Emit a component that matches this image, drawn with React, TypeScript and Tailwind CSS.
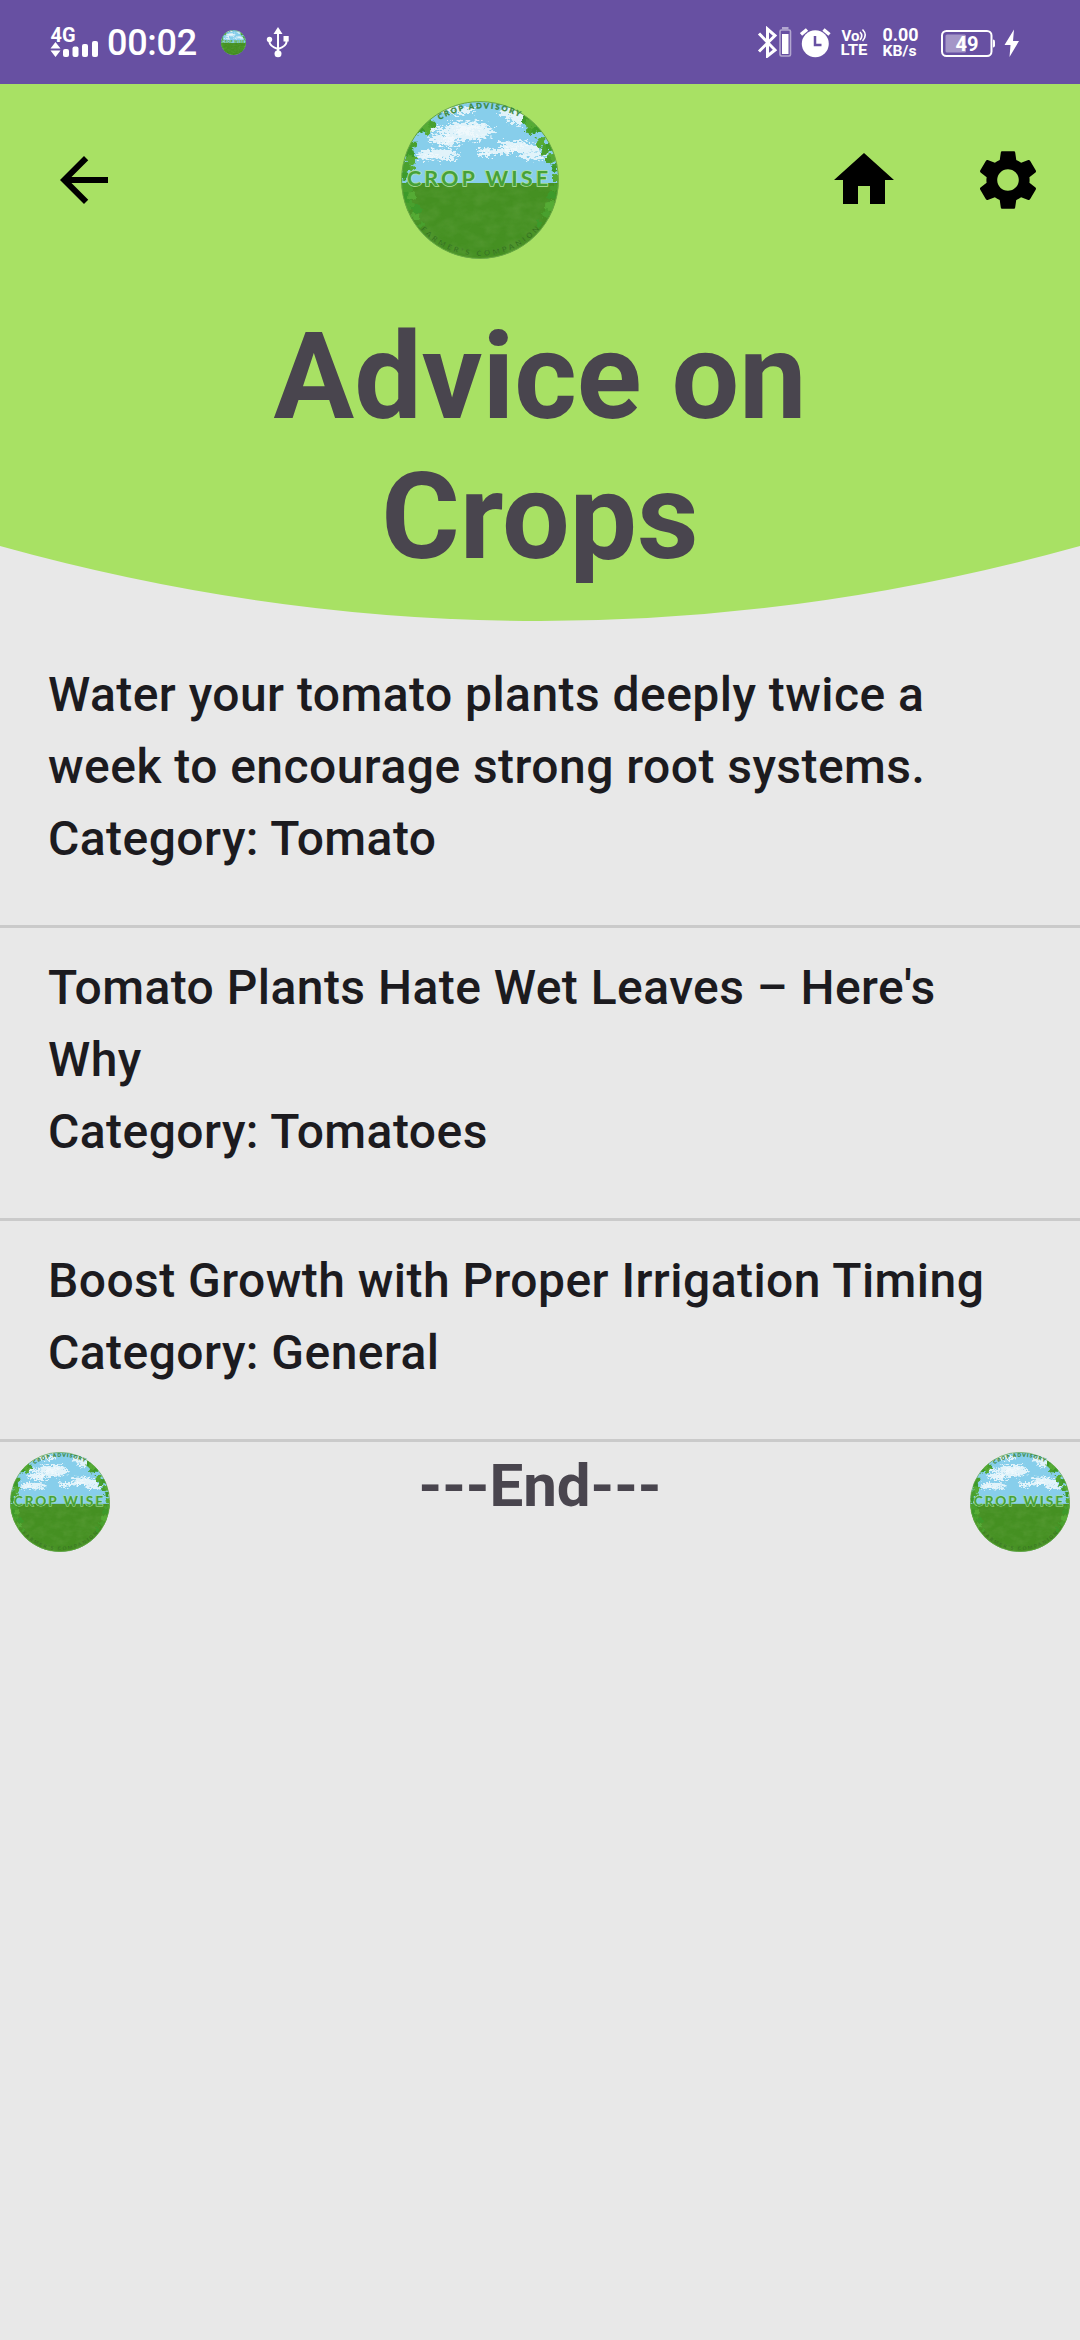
import { useId } from "react";

const leaves = [
  [30, 38, 5], [36, 33, 6], [42, 34, 4], [25, 42, 4], [38, 40, 4], [22, 55, 4],
  [19, 62, 5], [21, 70, 5], [16, 78, 5], [14, 86, 4], [22, 78, 3], [16, 98, 6],
  [17, 108, 5], [22, 106, 4], [20, 116, 5], [27, 119, 4], [26, 127, 4], [32, 134, 3],
  [136, 29, 4], [141, 34, 6], [140, 41, 4], [147, 40, 4], [151, 52, 5], [155, 60, 5],
  [160, 56, 4], [162, 68, 5], [158, 69, 3], [164, 78, 4], [166, 88, 4], [165, 98, 4],
  [162, 106, 4], [160, 116, 5], [156, 124, 4], [149, 134, 4],
];
const clouds = [
  [78, 35, 20, 3.5], [62, 40, 22, 3.5], [84, 41, 20, 5], [52, 49, 14, 4], [75, 47, 24, 3.5], [58, 53, 12, 2.5],
  [48, 63, 20, 3.5], [40, 67, 14, 2.5], [58, 69, 10, 2], [125, 54, 16, 3], [108, 61, 22, 3],
  [132, 59, 20, 4], [143, 66, 14, 3.5], [96, 64, 9, 2], [124, 23, 16, 5], [128, 31, 9, 4], [68, 20, 18, 4], [42, 36, 5, 4],
];

function Logo({ className }: { className: string }) {
  const id = useId().replace(/[^a-zA-Z0-9]/g, "");
  return (
    <svg viewBox="11 11 158 158" className={className}>
      <defs>
        <clipPath id={`c${id}`}><circle cx="90" cy="90" r="78.5" /></clipPath>
        <filter id={`n${id}`} x="-20%" y="-20%" width="140%" height="140%">
          <feTurbulence type="fractalNoise" baseFrequency="0.2" numOctaves="3" seed="4" />
          <feDisplacementMap in="SourceGraphic" scale="8" xChannelSelector="R" yChannelSelector="G" />
        </filter>
        <filter id={`w${id}`} x="-20%" y="-20%" width="140%" height="140%">
          <feTurbulence type="fractalNoise" baseFrequency="0.25 0.5" numOctaves="4" seed="11" />
          <feDisplacementMap in="SourceGraphic" scale="14" xChannelSelector="R" yChannelSelector="G" />
          <feGaussianBlur stdDeviation="0.5" />
        </filter>
        <filter id={`g${id}`} x="0" y="0" width="100%" height="100%">
          <feTurbulence type="fractalNoise" baseFrequency="0.06 0.09" numOctaves="3" seed="8" />
          <feColorMatrix values="0 0 0 0 0.12  0 0 0 0 0.36  0 0 0 0 0.05  1.6 0 0 0 -0.55" />
          <feComposite in2="SourceGraphic" operator="in" />
        </filter>
        <path id={`t${id}`} d="M49.500 30 A86 86 0 0 1 131 27.500" />
        <path id={`b${id}`} d="M30.500 139.500 A80 80 0 0 0 151.500 137" />
      </defs>
      <g clipPath={`url(#c${id})`}>
        <rect width="180" height="180" fill="#87ceeb" />
        <g fill="#f1f9fd" fillOpacity="0.85" filter={`url(#w${id})`}>
          {clouds.map(([x, y, rx, ry], i) => <ellipse key={i} cx={x} cy={y} rx={rx} ry={ry} />)}
        </g>
        <rect y="93" width="180" height="90" fill="#459022" />
        <rect y="93" width="180" height="87" fill="#000" filter={`url(#g${id})`} opacity="0.55" />
        <g filter={`url(#n${id})`}>
          {leaves.map(([x, y, r], i) => (
            <circle key={i} cx={x} cy={y} r={r} fill={i % 3 === 0 ? "#3d9a2b" : i % 3 === 1 ? "#55ab35" : "#48a02e"} />
          ))}
        </g>
      </g>
      <circle cx="90" cy="90" r="78.4" fill="none" stroke="#68a83d" strokeWidth="1" />
      <text x="17" y="96.200" textLength="141" fontFamily="Lato, sans-serif" fontWeight="700" fontSize="21.500" fill="#46a13a" stroke="#b2e2a0" strokeWidth="1.500" paintOrder="stroke">CROP WISE</text>
      <text fontFamily="Lato, sans-serif" fontWeight="900" fontSize="7.500" fill="#39883d" stroke="#39883d" strokeWidth="0.300">
        <textPath href={`#t${id}`} textLength="83">CROP ADVISORY</textPath>
      </text>
      <text fontFamily="Lato, sans-serif" fontWeight="900" fontSize="7.500" fill="#2d6d16" stroke="#58993b" strokeWidth="0.300">
        <textPath href={`#b${id}`} textLength="134">FARMER’S COMPANION</textPath>
      </text>
    </svg>
  );
}

function StatusBar() {
  return (
    <div className="flex h-[84px] items-start bg-[#6750a2] pt-[26px] text-white">
      <svg className="ml-[50px] h-8 w-[49px] overflow-visible" viewBox="50 26 49 32" fill="#fff">
        <text x="50.500" y="41.500" fontFamily="Roboto, sans-serif" fontWeight="700" fontSize="20" textLength="25" lengthAdjust="spacingAndGlyphs">4G</text>
        <path d="M50.500 48.500L55.500 42l5 6.500zM50.500 50.500h10l-5 6.500z" />
        <rect x="63" y="49" width="6" height="8" rx="2" />
        <rect x="72.500" y="46.500" width="6" height="10.500" rx="2" />
        <rect x="82" y="44" width="6" height="13" rx="2" />
        <rect x="92" y="41" width="6" height="16" rx="2" />
      </svg>
      <span className="ml-2 mt-[-1px] w-[95px] whitespace-nowrap text-[36px] font-medium leading-[36px] tracking-[-0.3px]">00:02</span>
      <Logo className="ml-[19px] mt-1 size-[25px]" />
      <svg className="ml-5 h-8 w-6" viewBox="267 26 24 32" fill="none" stroke="#fff" strokeWidth="2">
        <path d="M279 30V54M270.500 40v2q0 4 8.500 7q8.500-3 8.500-7v-3" />
        <path d="M279 27l4.500 7h-9z" fill="#fff" stroke="none" />
        <circle cx="279" cy="53.700" r="3.500" fill="#fff" stroke="none" />
        <circle cx="270.500" cy="39.500" r="2.700" fill="#fff" stroke="none" />
        <rect x="284.500" y="36" width="5.200" height="5.500" fill="#fff" stroke="none" />
      </svg>
      <svg className="ml-[467px] h-8 w-[35px]" viewBox="758 26 35 32" fill="none">
        <path d="M760 33.500L776 50L768.500 56V29L776 35.500L760 51.500" stroke="#fff" strokeWidth="3" />
        <rect x="781" y="30" width="10.500" height="26" rx="1.500" stroke="#b3a7d0" strokeWidth="1.600" />
        <rect x="783" y="27" width="6.500" height="2.500" fill="#b3a7d0" />
        <rect x="783" y="34" width="6.500" height="20" fill="#fff" />
      </svg>
      <svg className="ml-2 h-8 w-[31px]" viewBox="801 26 31 32" fill="none">
        <circle cx="816.300" cy="43.700" r="13.500" fill="#fff" />
        <path d="M802 34.500L808 29.500M830.500 34.500L824.500 29.500" stroke="#fff" strokeWidth="3.500" />
        <path d="M816 36v9h6.500" stroke="#6750a2" strokeWidth="2.500" />
      </svg>
      <svg className="ml-[10px] h-8 w-[27px] overflow-visible" viewBox="842 26 27 32" fill="#fff">
        <text x="842.500" y="40.500" fontFamily="Roboto, sans-serif" fontWeight="700" fontSize="14" textLength="18" lengthAdjust="spacingAndGlyphs">Vo</text>
        <path d="M861 32q3.500 3.500 0 8M863.500 29.500q5.500 5.500 0 11.500" fill="none" stroke="#fff" strokeWidth="1.600" />
        <text x="841.500" y="55" fontFamily="Roboto, sans-serif" fontWeight="700" fontSize="15.500" textLength="27" lengthAdjust="spacingAndGlyphs">LTE</text>
      </svg>
      <svg className="ml-[14px] h-8 w-9 overflow-visible" viewBox="883 26 36 32" fill="#fff" fontFamily="Roboto, sans-serif" fontWeight="700">
        <text x="883.500" y="41" fontSize="18" textLength="36" lengthAdjust="spacingAndGlyphs">0.00</text>
        <text x="883.500" y="56" fontSize="15" textLength="34" lengthAdjust="spacingAndGlyphs">KB/s</text>
      </svg>
      <svg className="ml-[22px] h-8 w-14" viewBox="941 26 56 32" fill="none">
        <rect x="943" y="31" width="49.500" height="25" rx="4.500" stroke="#fff" strokeWidth="2" />
        <rect x="946.500" y="34.500" width="20.500" height="18" rx="1.500" fill="#a496c7" />
        <path d="M994 39.500q2 0 2 2v4q0 2-2 2z" fill="#fff" />
        <text x="956.500" y="51" fontFamily="Roboto, sans-serif" fontWeight="700" fontSize="20" fill="#fff" textLength="23" lengthAdjust="spacingAndGlyphs">49</text>
      </svg>
      <svg className="ml-2 h-8 w-4" viewBox="1005 26 16 32" fill="#fff">
        <path d="M1015 29.500L1005.500 45H1011.500L1010.500 57L1020 41H1014Z" />
      </svg>
    </div>
  );
}

function AppBar() {
  return (
    <div className="flex h-48 items-center">
      <svg viewBox="0 0 24 24" className="ml-12 size-[72px]"><path d="M20 11H7.830l5.590-5.590L12 4l-8 8 8 8 1.410-1.410L7.830 13H20v-2z" /></svg>
      <Logo className="ml-[281px] size-[158px]" />
      <svg viewBox="0 0 24 24" className="ml-[269px] size-[72px]"><path d="M10 20v-6h4v6h5v-8h3L12 3 2 12h3v8z" /></svg>
      <svg viewBox="0 0 24 24" className="ml-[72px] size-[72px]">
        <path fillRule="evenodd" d="M19.140 12.940c.04-.3.06-.61.06-.94 0-.32-.02-.64-.07-.94l2.030-1.580c.18-.14.23-.41.12-.61l-1.920-3.320c-.12-.22-.37-.29-.59-.22l-2.390.96c-.5-.38-1.030-.7-1.620-.94l-.36-2.540c-.04-.24-.24-.41-.48-.41h-3.840c-.24 0-.43.17-.47.41l-.36 2.540c-.59.24-1.130.57-1.620.94l-2.390-.96c-.22-.08-.47 0-.59.22L2.740 8.870c-.12.21-.08.47.12.61l2.030 1.580c-.05.3-.09.63-.09.94s.02.64.07.94l-2.030 1.580c-.18.14-.23.41-.12.61l1.920 3.320c.12.22.37.29.59.22l2.390-.96c.5.38 1.030.7 1.620.94l.36 2.540c.05.24.24.41.48.41h3.840c.24 0 .44-.17.47-.41l.36-2.540c.59-.24 1.130-.56 1.620-.94l2.390.96c.22.08.47 0 .59-.22l1.920-3.320c.12-.22.07-.47-.12-.61l-2.010-1.580zM12 15.600c-1.980 0-3.600-1.620-3.600-3.600s1.620-3.600 3.600-3.600 3.600 1.620 3.600 3.600-1.620 3.600-3.600 3.600z" />
      </svg>
    </div>
  );
}

const advice = [
  { lines: ["Water your tomato plants deeply twice a", "week to encourage strong root systems."], category: "Tomato" },
  { lines: ["Tomato Plants Hate Wet Leaves – Here's", "Why"], category: "Tomatoes" },
  { lines: ["Boost Growth with Proper Irrigation Timing"], category: "General" },
];

export default function App() {
  return (
    <div className="flex h-[2340px] w-[1080px] flex-col overflow-hidden bg-[#e8e8e8] font-['Roboto',sans-serif]">
      <StatusBar />
      <header className="relative isolate h-[537px]">
        <svg className="absolute inset-0 -z-10 h-[537px] w-[1080px]" viewBox="0 0 1080 537" fill="#a8e164">
          <path d="M0 0H1080V462Q540 612 0 462Z" />
        </svg>
        <AppBar />
        <h1 className="mt-[31px] text-center text-[120px] font-bold leading-[140px] text-[#49454e]">Advice on<br />Crops</h1>
      </header>
      <ul className="mt-[14px]">
        {advice.map((item) => (
          <li key={item.category} className="border-b-[3px] border-[#cacaca] pb-[50px] pl-12 pt-6 text-[48px] font-medium leading-[72px] tracking-[0.45px] text-[#1c1b1f]">
            {item.lines.map((line) => <p key={line} className="whitespace-nowrap">{line}</p>)}
            <p>Category: {item.category}</p>
          </li>
        ))}
      </ul>
      <footer className="flex items-start justify-between px-[10px] pt-[10px]">
        <Logo className="size-[100px]" />
        <p className="mt-[-1px] text-[60px] font-bold leading-[70px] text-[#49454e]">---End---</p>
        <Logo className="size-[100px]" />
      </footer>
    </div>
  );
}
